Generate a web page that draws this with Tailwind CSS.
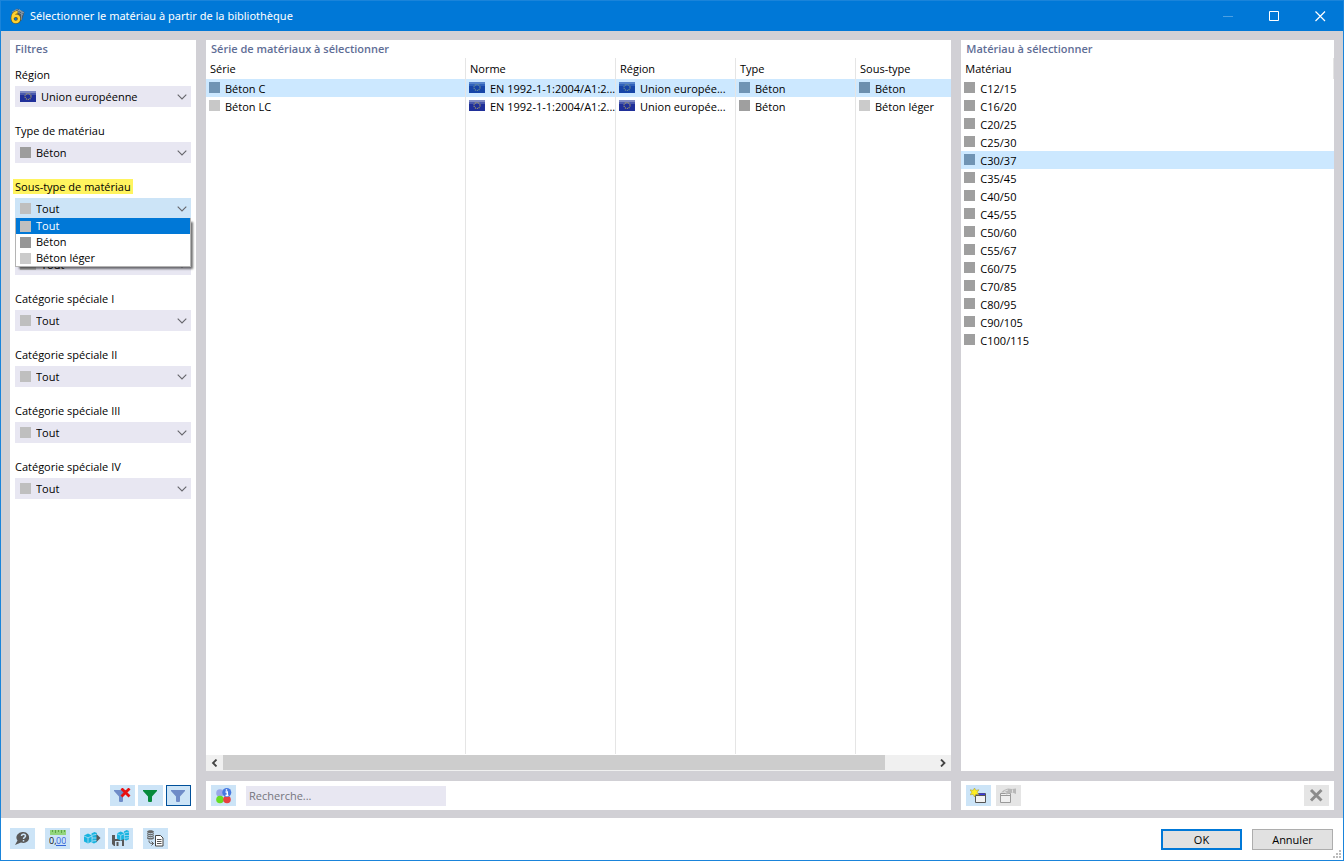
<!DOCTYPE html>
<html lang="fr">
<head>
    <meta charset="UTF-8">
    <meta name="viewport" content="width=device-width, initial-scale=1.0">
    <title>Sélectionner le matériau à partir de la bibliothèque</title>
    <script src="https://cdn.jsdelivr.net/npm/@tailwindcss/browser@4"></script>
</head>
<body class="min-h-screen flex flex-col border border-[#1a84da] bg-[#d1d0d5] font-['Open_Sans','Noto_Sans',sans-serif] text-[11px] leading-4 text-black">

    <!-- Shared icons -->
    <svg class="hidden">
        <symbol id="chevron" viewBox="0 0 10 6"><path d="M.7.7 5 5 9.3.7" fill="none" stroke="#66666c" stroke-width="1.1"/></symbol>
        <symbol id="flag" viewBox="0 0 16 11">
            <rect width="16" height="11" fill="#20309a"/>
            <rect width="16" height="4" fill="#4a59ac"/>
            <rect width="16" height="2" fill="#7f8ac4"/>
            <circle cx="8" cy="5.5" r="3" fill="none" stroke="#b5a860" stroke-width="1.1" stroke-dasharray="1 .9"/>
        </symbol>
        <symbol id="flag-selected" viewBox="0 0 16 11">
            <rect width="16" height="11" fill="#1746a8"/>
            <rect width="16" height="4" fill="#2f62bb"/>
            <rect width="16" height="2" fill="#5583cc"/>
            <circle cx="8" cy="5.5" r="3" fill="none" stroke="#80a08c" stroke-width="1.1" stroke-dasharray="1 .9"/>
        </symbol>
        <symbol id="funnel" viewBox="0 0 16 16"><path d="M0 2h14v1L9 8.500v5l-1 .5H6l-1-.5v-5L0 3z"/></symbol>
        <symbol id="cubes" viewBox="0 0 13 12">
            <path d="M0 3.500L4 1.500l4 2v6l-4 2-4-2z" fill="#18b4e0"/>
            <path d="M7.500 1.500l3-1.500L13 1v9l-3 1.500-2.500-1z" fill="#18b4e0"/>
            <path d="M0 4l4 1.800L8 4M4 6v5.500M8 3v7.500M8 6h5M8.500 3.200l4.500-1M8.500 9l4.500-.6" fill="none" stroke="#cce4f7" stroke-width=".7"/>
        </symbol>
    </svg>

    <!-- Title bar -->
    <header class="flex h-[30px] items-center bg-[#0078d7] pl-2 text-white">
        <svg class="size-4" viewBox="0 0 16 16">
            <path d="M3 4l5-3.500L15.500 4 13 12l-3 2z" fill="#4a5a68"/>
            <path d="M3 4l5-2.500L14 5M6 2l8 5M10 1.500l5 3.500M13 4l-1 8M5 5l6-3" fill="none" stroke="#8fa6b8" stroke-width=".8"/>
            <path d="M8.500 4C5.500 4.500 3.500 7 3.500 10c0 2.500 1 4 3.200 4s3.300-1.300 3.300-3.200-1.200-3-3-3-2.800.9-3.200 2.200" fill="none" stroke="#6b5510" stroke-width="3.600"/>
            <path d="M8.500 4C5.500 4.500 3.500 7 3.500 10c0 2.500 1 4 3.200 4s3.300-1.300 3.300-3.200-1.200-3-3-3-2.800.9-3.200 2.200" fill="none" stroke="#fcd030" stroke-width="2.400"/>
        </svg>
        <h1 class="ml-[5px] grow truncate font-['Noto_Sans',sans-serif]">Sélectionner le matériau à partir de la bibliothèque</h1>
        <button class="flex h-full w-[46px] items-center justify-center" aria-label="Réduire">
            <svg class="size-[11px]" viewBox="0 0 11 11"><path d="M0 5.500h10" stroke="#4ca0e3"/></svg>
        </button>
        <button class="flex h-full w-[46px] items-center justify-center" aria-label="Agrandir">
            <svg class="size-[11px]" viewBox="0 0 11 11"><path d="M.5.5h9v9h-9z" fill="none" stroke="#fff"/></svg>
        </button>
        <button class="flex h-full w-[46px] items-center justify-center" aria-label="Fermer">
            <svg class="size-[11px]" viewBox="0 0 11 11"><path d="M.5.5l9.500 9.500M10 .5L.5 10" stroke="#fff" stroke-width="1.200"/></svg>
        </button>
    </header>

    <main class="flex grow gap-[10px] px-[9px] pt-[9px] pb-2">

        <!-- Filters -->
        <section class="flex w-[186px] shrink-0 flex-col bg-white px-[5px] pb-1">
            <h2 class="h-[27px] leading-[18px] font-semibold text-[#5f6e96]">Filtres</h2>
            <div class="flex flex-col gap-4">
                <div>
                    <label for="region" class="mb-1 block w-fit leading-[15px]">Région</label>
                    <div class="flex h-[21px] items-center bg-[#e8e7f2] pr-1 pl-[5px]">
                        <svg class="h-[11px] w-4"><use href="#flag"/></svg>
                        <select id="region" class="grow appearance-none pl-[5px] outline-none"><option>Union européenne</option></select>
                        <svg class="h-[6px] w-[10px]"><use href="#chevron"/></svg>
                    </div>
                </div>
                <div>
                    <label for="type" class="mb-1 block w-fit leading-[15px]">Type de matériau</label>
                    <div class="flex h-[21px] items-center bg-[#e8e7f2] pr-1 pl-[5px]">
                        <span class="size-[11px] bg-[#9d9d9d]"></span>
                        <select id="type" class="grow appearance-none pl-[5px] outline-none"><option>Béton</option></select>
                        <svg class="h-[6px] w-[10px]"><use href="#chevron"/></svg>
                    </div>
                </div>
                <div class="relative">
                    <label for="subtype" class="-ml-0.5 mb-1 block w-fit bg-[#fff45f] px-0.5 leading-[15px]">Sous-type de matériau</label>
                    <div class="flex h-[21px] items-center bg-[#cce4f7] pr-1 pl-[5px]">
                        <span class="size-[11px] bg-[#bfbfbf]"></span>
                        <select id="subtype" class="grow appearance-none pl-[5px] outline-none"><option>Tout</option><option>Béton</option><option>Béton léger</option></select>
                        <svg class="h-[6px] w-[10px]"><use href="#chevron"/></svg>
                    </div>
                    <!-- Open list -->
                    <ul role="listbox" aria-label="Sous-type de matériau" class="absolute inset-x-0 top-[39px] z-10 border-x border-b border-[#b4b4b4] bg-white shadow-[3px_3px_2px_-1px_rgba(0,0,0,0.55)]">
                        <li role="option" aria-selected="true" class="flex h-4 items-center gap-[5px] bg-[#0078d7] px-1 text-white"><span class="size-[11px] bg-[#bfbfbf]"></span>Tout</li>
                        <li role="option" class="flex h-4 items-center gap-[5px] px-1"><span class="size-[11px] bg-[#979797]"></span>Béton</li>
                        <li role="option" class="flex h-4 items-center gap-[5px] px-1"><span class="size-[11px] bg-[#cbcbcb]"></span>Béton léger</li>
                    </ul>
                </div>
                <div class="pt-[19px]">
                    <div class="flex h-[21px] items-center bg-[#e8e7f2] pr-1 pl-[5px]">
                        <span class="h-[11px] w-4 bg-[#bfbfbf]"></span>
                        <select aria-label="Norme" class="grow appearance-none pl-[5px] outline-none"><option>Tout</option></select>
                        <svg class="h-[6px] w-[10px]"><use href="#chevron"/></svg>
                    </div>
                </div>
                <div>
                    <label for="cat1" class="mb-1 block w-fit leading-[15px]">Catégorie spéciale I</label>
                    <div class="flex h-[21px] items-center bg-[#e8e7f2] pr-1 pl-[5px]">
                        <span class="size-[11px] bg-[#bfbfbf]"></span>
                        <select id="cat1" class="grow appearance-none pl-[5px] outline-none"><option>Tout</option></select>
                        <svg class="h-[6px] w-[10px]"><use href="#chevron"/></svg>
                    </div>
                </div>
                <div>
                    <label for="cat2" class="mb-1 block w-fit leading-[15px]">Catégorie spéciale II</label>
                    <div class="flex h-[21px] items-center bg-[#e8e7f2] pr-1 pl-[5px]">
                        <span class="size-[11px] bg-[#bfbfbf]"></span>
                        <select id="cat2" class="grow appearance-none pl-[5px] outline-none"><option>Tout</option></select>
                        <svg class="h-[6px] w-[10px]"><use href="#chevron"/></svg>
                    </div>
                </div>
                <div>
                    <label for="cat3" class="mb-1 block w-fit leading-[15px]">Catégorie spéciale III</label>
                    <div class="flex h-[21px] items-center bg-[#e8e7f2] pr-1 pl-[5px]">
                        <span class="size-[11px] bg-[#bfbfbf]"></span>
                        <select id="cat3" class="grow appearance-none pl-[5px] outline-none"><option>Tout</option></select>
                        <svg class="h-[6px] w-[10px]"><use href="#chevron"/></svg>
                    </div>
                </div>
                <div>
                    <label for="cat4" class="mb-1 block w-fit leading-[15px]">Catégorie spéciale IV</label>
                    <div class="flex h-[21px] items-center bg-[#e8e7f2] pr-1 pl-[5px]">
                        <span class="size-[11px] bg-[#bfbfbf]"></span>
                        <select id="cat4" class="grow appearance-none pl-[5px] outline-none"><option>Tout</option></select>
                        <svg class="h-[6px] w-[10px]"><use href="#chevron"/></svg>
                    </div>
                </div>
            </div>
            <div class="mt-auto flex justify-end gap-[3px]">
                <button class="flex h-[21px] w-[25px] items-center justify-center bg-[#cce4f7]" aria-label="Supprimer les filtres">
                    <svg class="h-4 w-[17px]" viewBox="0 0 17 16">
                        <path d="M0 2h13v1L9 8.500v5l-1 .5H6l-1-.5v-5L0 3z" fill="#6f8cc8"/>
                        <path d="M7.500.5l8 8M15.500.5l-8 8" stroke="#e81010" stroke-width="2.800"/>
                    </svg>
                </button>
                <button class="flex h-[21px] w-[25px] items-center justify-center bg-[#cce4f7]" aria-label="Filtrer">
                    <svg class="size-4 text-[#078a3c]" fill="currentColor"><use href="#funnel"/></svg>
                </button>
                <button class="flex h-[21px] w-[25px] items-center justify-center border border-[#00509a] bg-[#cce4f7]" aria-label="Filtre actif">
                    <svg class="size-4 text-[#6f8cc8]" fill="currentColor"><use href="#funnel"/></svg>
                </button>
            </div>
        </section>

        <!-- Material series -->
        <section class="flex min-w-0 flex-[2] flex-col gap-[10px]">
            <div class="flex grow flex-col bg-white">
                <h2 class="h-[18px] pl-[5px] leading-[18px] font-semibold text-[#5f6e96]">Série de matériaux à sélectionner</h2>
                <div class="grid grow">
                    <table class="h-full w-full table-fixed border-separate border-spacing-0 text-left">
                        <colgroup>
                            <col class="w-[260px]"><col class="w-[150px]"><col class="w-[120px]"><col class="w-[120px]"><col>
                        </colgroup>
                        <thead>
                            <tr class="h-[21px]">
                                <th class="border-r border-[#e5e5e5] pl-1 font-normal">Série</th>
                                <th class="border-r border-[#e5e5e5] pl-1 font-normal">Norme</th>
                                <th class="border-r border-[#e5e5e5] pl-1 font-normal">Région</th>
                                <th class="border-r border-[#e5e5e5] pl-1 font-normal">Type</th>
                                <th class="pl-1 font-normal">Sous-type</th>
                            </tr>
                        </thead>
                        <tbody>
                            <tr class="h-[18px] bg-[#cce8ff]">
                                <td class="border-r border-[#e5e5e5] pl-[3px]"><div class="flex h-[18px] gap-[5px] leading-5"><span class="mt-[3px] size-[11px] bg-[#7094b4]"></span>Béton C</div></td>
                                <td class="border-r border-[#e5e5e5] pl-[3px]"><div class="flex h-[18px] gap-[5px] leading-5"><svg class="mt-[3px] h-[11px] w-4 shrink-0"><use href="#flag-selected"/></svg><span class="whitespace-nowrap">EN 1992-1-1:2004/A1:2...</span></div></td>
                                <td class="border-r border-[#e5e5e5] pl-[3px]"><div class="flex h-[18px] gap-[5px] leading-5"><svg class="mt-[3px] h-[11px] w-4 shrink-0"><use href="#flag-selected"/></svg><span class="whitespace-nowrap">Union europée...</span></div></td>
                                <td class="border-r border-[#e5e5e5] pl-[3px]"><div class="flex h-[18px] gap-[5px] leading-5"><span class="mt-[3px] size-[11px] bg-[#7094b4]"></span>Béton</div></td>
                                <td class="pl-[3px]"><div class="flex h-[18px] gap-[5px] leading-5"><span class="mt-[3px] size-[11px] bg-[#6c8fae]"></span>Béton</div></td>
                            </tr>
                            <tr class="h-[18px]">
                                <td class="border-r border-[#e5e5e5] pl-[3px]"><div class="flex h-[18px] gap-[5px] leading-5"><span class="mt-[3px] size-[11px] bg-[#c8c8c8]"></span>Béton LC</div></td>
                                <td class="border-r border-[#e5e5e5] pl-[3px]"><div class="flex h-[18px] gap-[5px] leading-5"><svg class="mt-[3px] h-[11px] w-4 shrink-0"><use href="#flag"/></svg><span class="whitespace-nowrap">EN 1992-1-1:2004/A1:2...</span></div></td>
                                <td class="border-r border-[#e5e5e5] pl-[3px]"><div class="flex h-[18px] gap-[5px] leading-5"><svg class="mt-[3px] h-[11px] w-4 shrink-0"><use href="#flag"/></svg><span class="whitespace-nowrap">Union europée...</span></div></td>
                                <td class="border-r border-[#e5e5e5] pl-[3px]"><div class="flex h-[18px] gap-[5px] leading-5"><span class="mt-[3px] size-[11px] bg-[#9f9f9f]"></span>Béton</div></td>
                                <td class="pl-[3px]"><div class="flex h-[18px] gap-[5px] leading-5"><span class="mt-[3px] size-[11px] bg-[#cbcbcb]"></span>Béton léger</div></td>
                            </tr>
                            <!-- Empty space under the rows keeps the column lines -->
                            <tr>
                                <td class="border-r border-[#e5e5e5]"></td>
                                <td class="border-r border-[#e5e5e5]"></td>
                                <td class="border-r border-[#e5e5e5]"></td>
                                <td class="border-r border-[#e5e5e5]"></td>
                                <td></td>
                            </tr>
                        </tbody>
                    </table>
                </div>
                <div class="mt-px flex h-4 border-b border-[#f0f0f0] bg-[#f0f0f0]">
                    <button class="flex w-[17px] items-center justify-center" aria-label="Défiler à gauche">
                        <svg class="size-2" viewBox="0 0 8 8"><path d="M5.500.5L2 4l3.500 3.500" fill="none" stroke="#444" stroke-width="1.800"/></svg>
                    </button>
                    <div class="flex grow"><div class="w-[93%] bg-[#cdcdcd]"></div></div>
                    <button class="flex w-[17px] items-center justify-center" aria-label="Défiler à droite">
                        <svg class="size-2" viewBox="0 0 8 8"><path d="M2 .5L5.500 4 2 7.500" fill="none" stroke="#444" stroke-width="1.800"/></svg>
                    </button>
                </div>
            </div>
            <div class="flex h-[29px] items-center gap-[10px] bg-white px-[5px]">
                <button class="flex h-[21px] w-[25px] items-center justify-center bg-[#cce4f7]" aria-label="Informations">
                    <svg class="size-4" viewBox="0 0 16 16">
                        <circle cx="4" cy="5" r="3.800" fill="#99a8e8"/>
                        <circle cx="4" cy="11.500" r="3.800" fill="#66dd22"/>
                        <circle cx="11" cy="11.500" r="3.800" fill="#e84040"/>
                        <circle cx="10.800" cy="4.500" r="4.500" fill="#4678e0"/>
                        <path d="M9.500 4h1.800v3.500M9.500 7.500h3M10.500 1.200v1.500" fill="none" stroke="#fff" stroke-width="1.400"/>
                    </svg>
                </button>
                <input type="text" aria-label="Recherche" placeholder="Recherche..." class="h-5 w-[200px] bg-[#e8e7f2] px-[3px] outline-none placeholder:text-[#75757d]">
            </div>
        </section>

        <!-- Materials -->
        <section class="flex min-w-0 flex-1 flex-col gap-[10px]">
            <div class="grow bg-white">
                <h2 class="h-[18px] pl-[5px] leading-[18px] font-semibold text-[#5f6e96]">Matériau à sélectionner</h2>
                <table class="w-full border-separate border-spacing-0 text-left">
                    <thead>
                        <tr class="h-[21px]"><th class="border-r border-[#e5e5e5] pl-1 font-normal">Matériau</th></tr>
                    </thead>
                    <tbody id="materials"></tbody>
                </table>
            </div>
            <div class="flex h-[29px] items-center gap-[5px] bg-white px-[5px]">
                <button class="flex h-[21px] w-[25px] items-center justify-center bg-[#cce4f7]" aria-label="Nouveau matériau">
                    <svg class="h-4 w-[17px]" viewBox="0 0 17 16">
                        <path d="M5.500 5.500h10v9h-10z" fill="#f2f2f2" stroke="#555"/>
                        <path d="M6 5.500h9v1.500H6z" fill="#3a3ae0"/>
                        <path d="M5 7.500h11" stroke="#555"/>
                        <path d="M4.500 0l1.300 2.300L9 1.800 7.200 4.200 9 6.800l-3.200-.4L4.500 9 3.200 6.400 0 6.800l1.800-2.600L0 1.800l3.200.5z" fill="#ffee20" stroke="#9a9540" stroke-width=".5"/>
                    </svg>
                </button>
                <button class="flex h-[21px] w-[25px] items-center justify-center bg-[#e5e5e5]" aria-label="Modifier le matériau" disabled>
                    <svg class="h-4 w-[17px]" viewBox="0 0 17 16">
                        <path d="M.5 5.500h10v9H.5z" fill="#efefef" stroke="#999"/>
                        <path d="M.5 7.500h10" stroke="#999"/>
                        <path d="M1 4.500l3-2.500 4-1.500 4 .5 4-.5v5.500l-3.500-1.500-3 1-3 1-1.500-1 2-1.500z" fill="#b8b8b8"/>
                        <path d="M4 3.500l4-1.500M12.500 1.500v3" stroke="#e0e0e0"/>
                    </svg>
                </button>
                <button class="ml-auto flex h-[21px] w-[25px] items-center justify-center bg-[#e5e5e5]" aria-label="Supprimer" disabled>
                    <svg class="size-4" viewBox="0 0 16 16"><path d="M2 2l10.500 10.500M12.500 2L2 12.500" stroke="#8c8c8c" stroke-width="3"/></svg>
                </button>
            </div>
        </section>
    </main>

    <!-- Dialog buttons -->
    <footer class="relative flex h-[42px] items-start justify-between bg-white pt-[10px] pr-[10px] pl-[9px]">
        <div class="flex">
            <button class="mr-[10px] flex h-[21px] w-[25px] items-center justify-center bg-[#cce4f7]" aria-label="Aide">
                <svg class="size-4" viewBox="0 0 16 16">
                    <path d="M8.500 1a6 5.500 0 1 1-2.500 10.600L0 14l2.500-4.500A6 5.500 0 0 1 8.500 1z" fill="#595959"/>
                    <path d="M6.500 5c0-2.500 4-2.500 4 0 0 1.500-2 1.300-2 3.100M8.500 9v1.500" fill="none" stroke="#cce4f7" stroke-width="1.500"/>
                </svg>
            </button>
            <button class="mr-[10px] flex h-[21px] w-[25px] items-center justify-center bg-[#cce4f7]" aria-label="Unités et décimales">
                <svg class="h-[17px] w-[17px]" viewBox="0 0 17 17">
                    <rect x="1" width="16" height="5" fill="#92d67c"/>
                    <path d="M3.500 0v2M6.500 0v3M9.500 0v2M12.500 0v3M15.500 0v2" stroke="#5da548"/>
                    <text x="0" y="14" font-size="9" fill="#111">0,</text>
                    <text x="7" y="14" font-size="9" fill="#3465d8">00</text>
                    <path d="M7 15.500h10" stroke="#3465d8"/>
                </svg>
            </button>
            <button class="mr-[3px] flex h-[21px] w-[25px] items-center justify-center bg-[#cce4f7]" aria-label="Importer">
                <svg class="h-4 w-[17px]" viewBox="0 0 17 16">
                    <use href="#cubes" width="13" height="12" x="0" y="1"/>
                    <path d="M12.500 3l4 4-4 4z" fill="#595959"/>
                </svg>
            </button>
            <button class="mr-[10px] flex h-[21px] w-[25px] items-center justify-center bg-[#cce4f7]" aria-label="Enregistrer">
                <svg class="h-[17px] w-[17px]" viewBox="0 0 17 17">
                    <path d="M0 5h12v11H2l-2-2z" fill="#595959"/>
                    <path d="M3 5h6v4H3zM3 11h7v5H3z" fill="#cce4f7"/>
                    <path d="M4.500 12h2v4h-2z" fill="#595959"/>
                    <use href="#cubes" width="12" height="11" x="5" y="0"/>
                </svg>
            </button>
            <button class="flex h-[21px] w-[25px] items-center justify-center bg-[#cce4f7]" aria-label="Rapport de la base de données">
                <svg class="h-[17px] w-[17px]" viewBox="0 0 17 17">
                    <path d="M0 2c0-2.500 7-2.500 7 0v6c0 2-7 2-7 0z" fill="#686868"/>
                    <path d="M0 2.500c1 1.500 6 1.500 7 0M0 4.500c1 1.500 6 1.500 7 0M0 6.500c1 1.500 6 1.500 7 0" fill="none" stroke="#cce4f7" stroke-width=".8"/>
                    <path d="M2 10.500c0 2.500 1 3 4.500 3M4.500 11.500l2 2-2 2" fill="none" stroke="#555"/>
                    <path d="M8.500 5.500h5l2.500 2.500v8h-7.500z" fill="#fff" stroke="#444"/>
                    <path d="M10 9.500h4.500M10 11.500h4.500M10 13.500h4.500" stroke="#555"/>
                </svg>
            </button>
        </div>
        <div class="flex gap-[10px] pt-px">
            <button class="h-[21px] w-[81px] border-2 border-[#0078d7] bg-[#e1e1e1] leading-[17px]">OK</button>
            <button class="h-[21px] w-[81px] border border-[#adadad] bg-[#e1e1e1] leading-[19px]">Annuler</button>
        </div>
        <svg class="absolute right-0.5 bottom-0.5 size-2" viewBox="0 0 8 8" fill="#bcbcbc">
            <path d="M6 0h2v2H6zM6 3h2v2H6zM3 3h2v2H3zM6 6h2v2H6zM3 6h2v2H3zM0 6h2v2H0z"/>
        </svg>
    </footer>

    <script>
        const materials = [
            'C12/15', 'C16/20', 'C20/25', 'C25/30', 'C30/37', 'C35/45', 'C40/50', 'C45/55',
            'C50/60', 'C55/67', 'C60/75', 'C70/85', 'C80/95', 'C90/105', 'C100/115'
        ];
        const selected = 'C30/37';

        // Fill the list of materials
        document.getElementById('materials').innerHTML = materials.map(name => `
            <tr class="${name === selected ? 'bg-[#cce8ff]' : 'bg-white'}">
                <td class="pl-[3px]">
                    <div class="flex h-[18px] gap-[5px] leading-5">
                        <span class="mt-[3px] size-[11px] ${name === selected ? 'bg-[#7094b4]' : 'bg-[#9f9f9f]'}"></span>${name}
                    </div>
                </td>
            </tr>
        `).join('');
    </script>
</body>
</html>
